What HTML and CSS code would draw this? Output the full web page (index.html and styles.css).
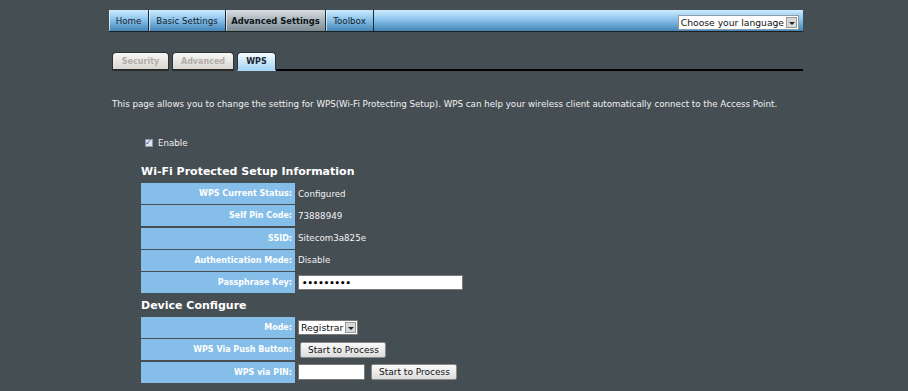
FILE: index.html
```html
<!DOCTYPE html>
<html lang="en">
<head>
    <meta charset="UTF-8">
    <title>WPS</title>
    <link rel="stylesheet" href="styles.css">
</head>
<body>
    <div class="page">
        <div class="menu">
            <a class="menu-item home">Home</a>
            <a class="menu-item basic">Basic Settings</a>
            <a class="menu-item advanced active">Advanced Settings</a>
            <a class="menu-item toolbox">Toolbox</a>
            <div class="lang">
                <span class="lang-text">Choose your language</span>
                <span class="drop-btn"></span>
            </div>
        </div>

        <div class="subtabs">
            <span class="subtab security">Security</span>
            <span class="subtab adv">Advanced</span>
            <span class="subtab wps current">WPS</span>
            <span class="subtab-line"></span>
        </div>

        <p class="intro">This page allows you to change the setting for WPS(Wi-Fi Protecting Setup). WPS can help your wireless client automatically connect to the Access Point.</p>

        <div class="form">
            <label class="enable"><span class="check">&#10003;</span>Enable</label>

            <h2 class="first">Wi-Fi Protected Setup Information</h2>
            <div class="rows">
                <div class="row"><div class="label">WPS Current Status:</div><div class="value">Configured</div></div>
                <div class="row"><div class="label">Self Pin Code:</div><div class="value">73888949</div></div>
                <div class="row"><div class="label">SSID:</div><div class="value">Sitecom3a825e</div></div>
                <div class="row"><div class="label">Authentication Mode:</div><div class="value">Disable</div></div>
                <div class="row"><div class="label">Passphrase Key:</div><div class="value"><span class="field pass">&bull;&bull;&bull;&bull;&bull;&bull;&bull;&bull;&bull;</span></div></div>
            </div>

            <h2>Device Configure</h2>
            <div class="rows">
                <div class="row"><div class="label">Mode:</div><div class="value"><span class="select"><span class="select-text">Registrar</span><span class="drop-btn"></span></span></div></div>
                <div class="row"><div class="label">WPS Via Push Button:</div><div class="value"><span class="btn push">Start to Process</span></div></div>
                <div class="row"><div class="label">WPS via PIN:</div><div class="value"><span class="field pin"></span><span class="btn">Start to Process</span></div></div>
            </div>
        </div>
    </div>
</body>
</html>
```

FILE: styles.css
```css
body {
    margin: 0;
    background: #454e53;
    font-family: "DejaVu Sans", Verdana, sans-serif;
    font-size: 8.7px;
    color: #f2f2f2;
}
.page {
    width: 694px;
    margin-left: 109px;
    padding-top: 10px;
}
.menu {
    display: flex;
    height: 21px;
    border-bottom: 1px solid #1a1f22;
    background: linear-gradient(#cdeafc, #8cc4ec 45%, #4283b5);
}
.menu-item {
    display: flex;
    align-items: center;
    justify-content: center;
    color: #14212b;
    border-right: 1px solid #1c2a35;
    box-shadow: inset 1px 0 0 rgba(255, 255, 255, 0.6);
}
.home { width: 39px; }
.basic { width: 76px; }
.advanced { width: 99px; }
.toolbox { width: 47px; }
.menu-item.active {
    font-weight: bold;
    font-size: 8.4px;
    color: #0e1418;
    background: linear-gradient(#d7dde1, #a9b4bb 50%, #7d8b95);
}
.lang {
    display: flex;
    align-items: center;
    margin: 5px 4px 0 auto;
    height: 13px;
    background: #fff;
    border: 1px solid #8a9aa6;
}
.lang-text {
    color: #111;
    font-size: 9.2px;
    padding: 0 2px;
}
.drop-btn {
    width: 11px;
    height: 11px;
    margin-right: 1px;
    background: #d8d8d8;
    border: 1px solid #9a9a9a;
    box-sizing: border-box;
    position: relative;
}
.drop-btn::after {
    content: "";
    position: absolute;
    left: 2px;
    top: 4px;
    border-left: 3px solid transparent;
    border-right: 3px solid transparent;
    border-top: 3px solid #222;
}
.subtabs {
    display: flex;
    align-items: flex-end;
    margin: 19px 0 0 3px;
    height: 20px;
}
.subtab {
    display: flex;
    align-items: center;
    justify-content: center;
    height: 16px;
    margin-right: 3px;
    font-size: 8px;
    font-weight: bold;
    color: #b2aca6;
    border: 1px solid #2c3237;
    border-bottom: 2px solid #2a2a2a;
    border-radius: 4px 4px 0 0;
    background: linear-gradient(#f7f7f5, #d9d6d2);
}
.security { width: 55px; }
.adv { width: 60px; }
.wps { width: 37px; }
.subtab.current {
    color: #1b2630;
    background: linear-gradient(#f4fbff, #a9d7f6);
    border-bottom-color: #a9d7f6;
    margin-right: 0;
}
.subtab-line {
    flex: 1;
    height: 2px;
    background: #000;
}
.intro {
    margin: 28px 0 0 3px;
    white-space: nowrap;
}
.form {
    margin-left: 32px;
    padding-top: 29px;
}
.enable {
    display: flex;
    align-items: center;
    margin-left: 4px;
}
.check {
    width: 8px;
    height: 8px;
    margin-right: 5px;
    background: #dfe3ea;
    border: 1px solid #8c98a4;
    box-sizing: border-box;
    color: #2c4fa0;
    font-size: 8px;
    font-weight: bold;
    line-height: 6px;
    text-indent: -1px;
}
h2 {
    margin: 6px 0 5px;
    font-size: 11px;
    color: #fff;
}
h2.first {
    margin-top: 17px;
}
.rows {
    display: flex;
    flex-direction: column;
    gap: 1.3px;
}
.row {
    display: flex;
    height: 21px;
}
.label {
    width: 151px;
    padding-right: 3px;
    background: #85bee8;
    display: flex;
    align-items: center;
    justify-content: flex-end;
    font-size: 8px;
    font-weight: bold;
    color: #fff;
}
.value {
    display: flex;
    align-items: center;
    padding-left: 3px;
    gap: 6px;
}
.field {
    height: 15px;
    background: #fff;
    border: 1px solid #7a7a7a;
    box-sizing: border-box;
    color: #000;
    display: flex;
    align-items: center;
    font-size: 8.5px;
    font-weight: bold;
    padding-left: 3px;
}
.pass {
    width: 165px;
}
.pin {
    width: 67px;
    height: 16px;
}
.select {
    display: flex;
    align-items: center;
    height: 13px;
    background: #fff;
    border: 1px solid #7a7a7a;
}
.select-text {
    color: #111;
    padding: 0 2px;
    font-size: 9.4px;
}
.btn {
    display: flex;
    align-items: center;
    height: 14px;
    padding: 0 6px 0 7px;
    color: #111;
    font-size: 9px;
    border: 1px solid #8a8a8a;
    border-radius: 2px;
    background: linear-gradient(#fafafa, #dcdcdc);
}
.btn.push {
    margin-left: 2px;
}
```
